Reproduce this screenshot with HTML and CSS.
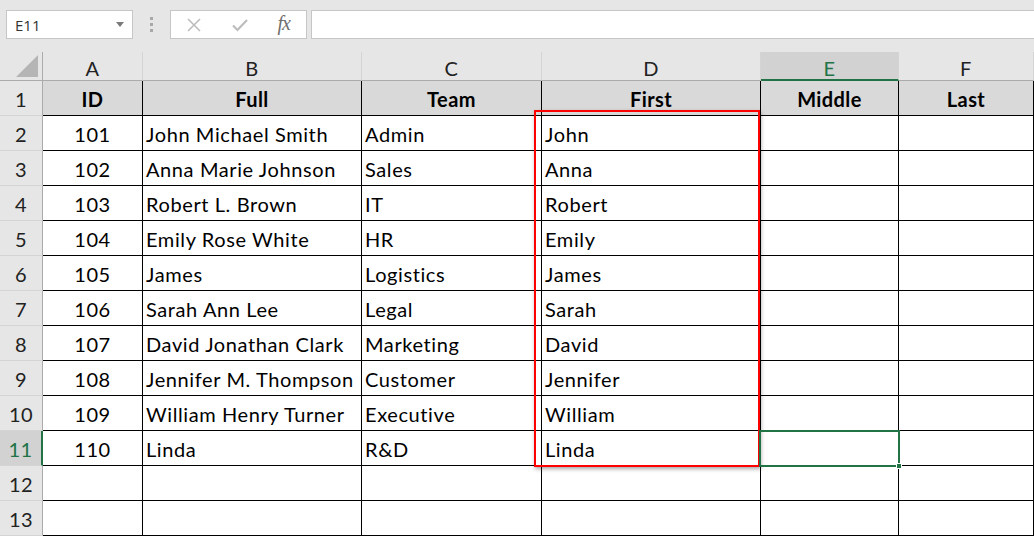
FILE: index.html
```html
<!DOCTYPE html>
<html lang="en">
<head>
  <meta charset="UTF-8" />
  <title>Split names</title>
  <link rel="stylesheet" href="styles.css">
</head>
<body>

  <div class="barra">
    <div class="namebox">
      <span>E11</span>
      <svg class="flecha" width="8" height="5" viewBox="0 0 8 5"><path d="M0 0h8L4 5z" fill="#7a7a7a"/></svg>
    </div>
    <div class="puntos"><i></i><i></i><i></i></div>
    <div class="botones">
      <svg width="16" height="16" viewBox="0 0 16 16"><path d="M2 2l12 12M14 2L2 14" stroke="#bdbdbd" stroke-width="1.6" fill="none"/></svg>
      <svg width="18" height="16" viewBox="0 0 18 16"><path d="M2 8.5l4.5 4.5L16 3" stroke="#bdbdbd" stroke-width="2.2" fill="none"/></svg>
      <span class="fx">fx</span>
    </div>
    <div class="formula"></div>
  </div>

  <div class="hoja">
    <div class="grid">
      <div class="esquina"><span class="triangulo"></span></div>
      <div class="col">A</div>
      <div class="col">B</div>
      <div class="col">C</div>
      <div class="col">D</div>
      <div class="col activa">E</div>
      <div class="col">F</div>

      <div class="fila">1</div>
      <div class="celda titulo">ID</div>
      <div class="celda titulo">Full</div>
      <div class="celda titulo">Team</div>
      <div class="celda titulo">First</div>
      <div class="celda titulo">Middle</div>
      <div class="celda titulo">Last</div>
    </div>
    <div class="grid" id="datos"></div>

    <div class="marco_rojo"></div>
    <div class="seleccion"><span class="asa"></span></div>
  </div>

  <script>
    const filas = [
      ["101", "John Michael Smith", "Admin", "John"],
      ["102", "Anna Marie Johnson", "Sales", "Anna"],
      ["103", "Robert L. Brown", "IT", "Robert"],
      ["104", "Emily Rose White", "HR", "Emily"],
      ["105", "James", "Logistics", "James"],
      ["106", "Sarah Ann Lee", "Legal", "Sarah"],
      ["107", "David Jonathan Clark", "Marketing", "David"],
      ["108", "Jennifer M. Thompson", "Customer", "Jennifer"],
      ["109", "William Henry Turner", "Executive", "William"],
      ["110", "Linda", "R&D", "Linda"],
      ["", "", "", ""],
      ["", "", "", ""]
    ];

    const datos = document.getElementById("datos");
    filas.forEach((f, i) => {
      const n = i + 2;
      const cab = document.createElement("div");
      cab.className = n === 11 ? "fila activa" : "fila";
      cab.textContent = n;
      datos.appendChild(cab);

      f.concat(["", ""]).forEach((valor, j) => {
        const celda = document.createElement("div");
        celda.className = j === 0 ? "celda centro" : "celda";
        celda.textContent = valor;
        datos.appendChild(celda);
      });
    });
  </script>

</body>
</html>
```

FILE: styles.css
```css
* {
  box-sizing: border-box;
}

body {
  margin: 0;
  padding: 0;
  width: 1034px;
  height: 537px;
  overflow: hidden;
  background-color: #ffffff;
  font-family: Lato, "Liberation Sans", sans-serif;
}

/* barra de formulas */
.barra {
  display: flex;
  align-items: center;
  height: 52px;
  padding: 10px 0 13px 6px;
  background-color: #e6e6e6;
}

.namebox {
  display: flex;
  align-items: center;
  justify-content: space-between;
  width: 127px;
  height: 29px;
  padding: 0 8px 0 8px;
  background-color: #fff;
  border: 1px solid #c6c6c6;
  font-family: "Open Sans", sans-serif;
  font-size: 15px;
  color: #333;
}

.puntos {
  display: flex;
  flex-direction: column;
  gap: 3px;
  width: 37px;
  align-items: center;
}

.puntos i {
  display: block;
  width: 3px;
  height: 3px;
  background-color: #a8a8a8;
}

.botones {
  display: flex;
  align-items: center;
  justify-content: space-between;
  width: 137px;
  height: 29px;
  padding: 0 16px 0 15px;
  background-color: #fff;
  border: 1px solid #c6c6c6;
}

.fx {
  font-family: "Liberation Serif", serif;
  font-style: italic;
  font-size: 20px;
  color: #6f6f6f;
  letter-spacing: -1px;
  margin-top: -2px;
}

.formula {
  flex: 1;
  height: 29px;
  margin-left: 4px;
  background-color: #fff;
  border: 1px solid #c6c6c6;
  border-right: none;
}

/* hoja */
.hoja {
  position: relative;
}

.grid {
  display: grid;
  grid-template-columns: 43px 100px 219px 180px 219px 138px 135px;
}

.esquina,
.col {
  height: 29px;
  background-color: #e6e6e6;
  border-bottom: 1px solid #ababab;
}

.esquina {
  position: relative;
  border-right: 1px solid #ababab;
}

.triangulo {
  position: absolute;
  right: 4px;
  bottom: 3px;
  width: 0;
  height: 0;
  border-left: 22px solid transparent;
  border-bottom: 22px solid #b5b5b5;
}

.col {
  display: flex;
  align-items: center;
  justify-content: center;
  padding-top: 3px;
  border-right: 1px solid #d4d4d4;
  font-size: 20px;
  letter-spacing: 0.5px;
  color: #222;
}

.col.activa {
  background-color: #d2d2d2;
  border-bottom: 2px solid #217346;
  color: #217346;
  padding-top: 5px;
}

.fila {
  display: flex;
  align-items: center;
  justify-content: center;
  height: 35px;
  padding-top: 2px;
  background-color: #e6e6e6;
  border-right: 1px solid #ababab;
  border-bottom: 1px solid #d4d4d4;
  font-size: 20px;
  letter-spacing: 0.5px;
  color: #222;
}

.fila.activa {
  background-color: #d2d2d2;
  border-right: 2px solid #217346;
  color: #217346;
}

.celda {
  display: flex;
  align-items: center;
  height: 35px;
  padding: 1px 0 0 3px;
  border-right: 1px solid #000;
  border-bottom: 1px solid #000;
  font-size: 20px;
  letter-spacing: 0.6px;
  color: #000;
  white-space: nowrap;
  overflow: hidden;
}

.celda.titulo {
  justify-content: center;
  padding-left: 0;
  background-color: #d9d9d9;
  font-weight: bold;
  letter-spacing: 0.4px;
}

.celda.centro {
  justify-content: center;
  padding-left: 0;
}

/* recuadros encima */
.marco_rojo {
  position: absolute;
  left: 534px;
  top: 58px;
  width: 226px;
  height: 357px;
  border: 2px solid #ff0000;
  box-shadow: 1px 2px 4px rgba(0, 0, 0, 0.35);
}

.seleccion {
  position: absolute;
  left: 759px;
  top: 378px;
  width: 141px;
  height: 37px;
  border: 2px solid #217346;
}

.asa {
  position: absolute;
  right: -4px;
  bottom: -4px;
  width: 6px;
  height: 6px;
  background-color: #217346;
  border: 1px solid #fff;
}
```
